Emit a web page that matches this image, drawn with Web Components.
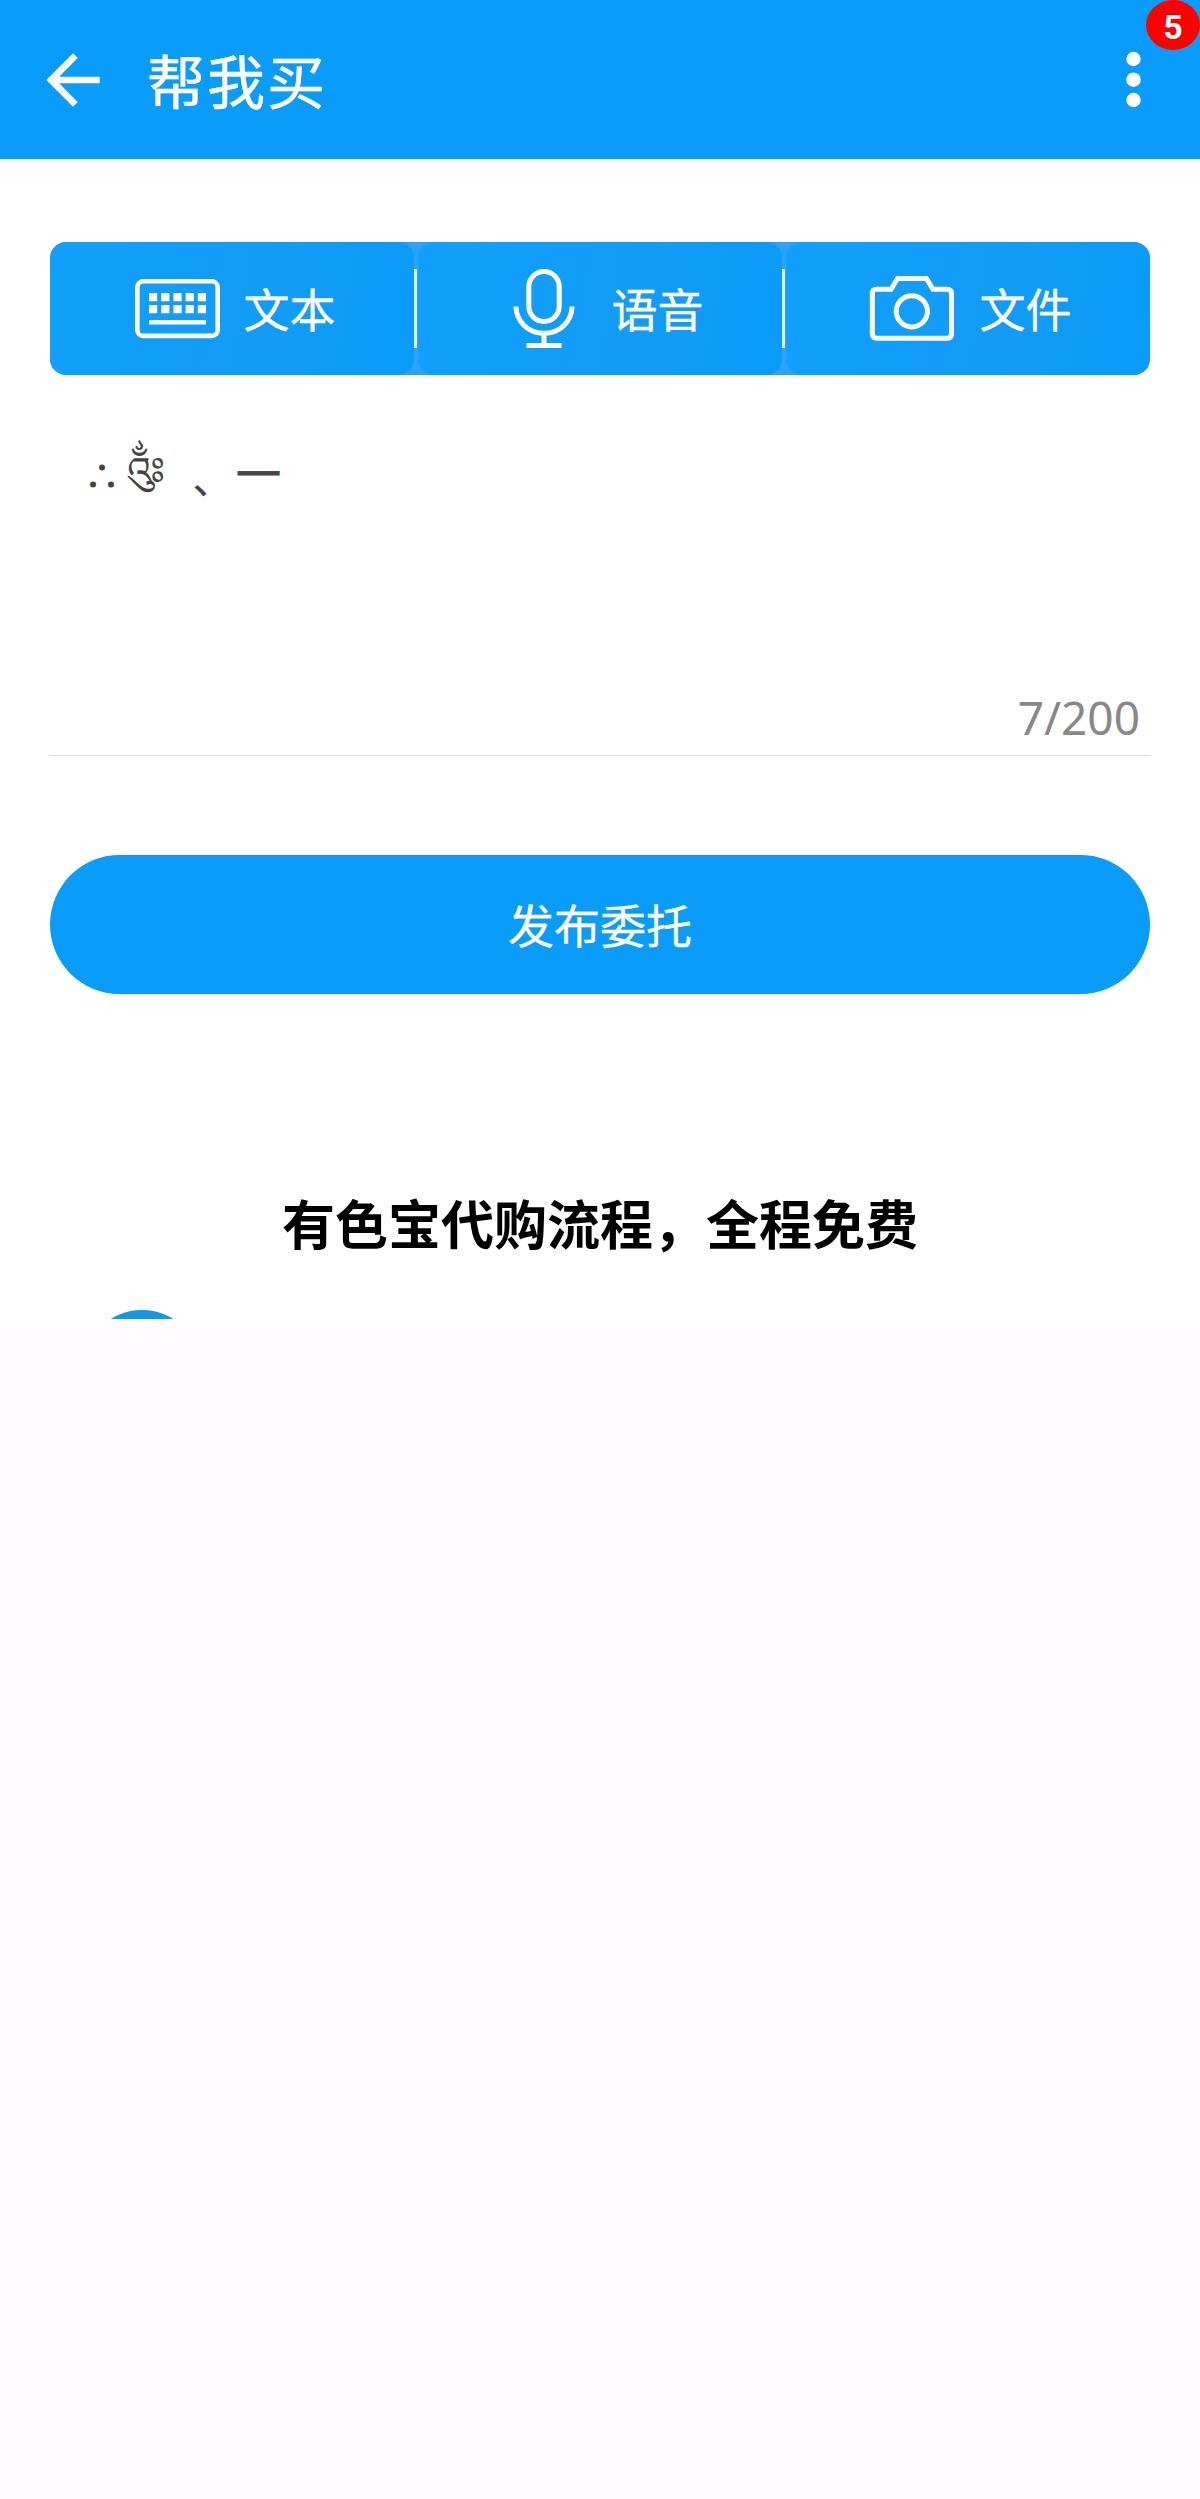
<!DOCTYPE html>
<html lang="zh-CN">
<head>
<meta charset="utf-8">
<title>帮我买</title>
<style>
  html, body {
    margin: 0;
    background: #fffbff;
  }
  body {
    font-family: "Noto Sans", "Noto Sans CJK SC", sans-serif;
  }
</style>
</head>
<body>
<buy-page>
  <app-header slot="header" badge="5">帮我买</app-header>
  <mode-tabs>
    <mode-tab icon="keyboard">文本</mode-tab>
    <mode-tab icon="mic" divider>语音</mode-tab>
    <mode-tab icon="camera" divider>文件</mode-tab>
  </mode-tabs>
  <note-field count="7" max="200"><span class="dots">∴</span><span class="mark">༂</span><span class="comma">、</span><span class="dash">一</span></note-field>
  <submit-button>发布委托</submit-button>
  <flow-section>有色宝代购流程，全程免费</flow-section>
</buy-page>

<script>
const ICONS = {
  keyboard: `
    <svg width="85" height="80" viewBox="0 0 85 80" fill="none" stroke="currentColor">
      <rect x="2.3" y="12.3" width="80.4" height="54.6" rx="6" stroke-width="4.6"/>
      <path d="M14 28.2h57M14 40.2h57" stroke-width="8.2" stroke-dasharray="8.2 4"/>
      <path d="M14 53.3h57" stroke-width="4.6"/>
    </svg>`,
  mic: `
    <svg width="85" height="80" viewBox="1.5 0 85 80" fill="none" stroke="currentColor" stroke-width="5">
      <rect x="27.3" y="2.6" width="30.4" height="49.8" rx="15.2"/>
      <path d="M14.4 37.5C15 53 27 64.3 42.5 64.3S70 53 70.6 37.5"/>
      <path d="M42.5 64v12M25 76.5h35"/>
    </svg>`,
  camera: `
    <svg width="85" height="80" viewBox="1.5 0 85 80" fill="none" stroke="currentColor" stroke-width="5" overflow="visible">
      <path d="M2.8 24.5Q2.8 20.3 7 20.3H21.5L28 9.5H57L63.5 20.3H77.5Q82 20.3 82 24.8V64.5Q82 69.3 77.5 69.3H7.5Q2.8 69.3 2.8 64.5Z"/>
      <circle cx="42.3" cy="42.3" r="15.6"/>
    </svg>`
};

class BuyPage extends HTMLElement {
  constructor() {
    super();
    this.attachShadow({ mode: 'open' });
    this.shadowRoot.innerHTML = `
      <style>
        :host { display: block; height: 1319px; overflow: hidden; background: #fff; }
        main { display: flex; flex-direction: column; padding: 83px 50px 0; }
      </style>
      <slot name="header"></slot>
      <main><slot></slot></main>
    `;
  }
}

class AppHeader extends HTMLElement {
  constructor() {
    super();
    this.attachShadow({ mode: 'open' });
    this.shadowRoot.innerHTML = `
      <style>
        :host {
          display: flex;
          align-items: center;
          position: relative;
          box-sizing: border-box;
          height: 159px;
          padding: 1px 47px 0 33px;
          background: #0a9cf9;
          color: #fff;
        }
        svg { display: block; }
        h1 {
          flex: 1;
          margin: 0 0 0 34px;
          padding-top: 4px;
          font-size: 58px;
          font-weight: 400;
          line-height: 80px;
          letter-spacing: 2px;
          -webkit-text-stroke: 0.5px #fff;
        }
        .badge {
          position: absolute;
          top: 0;
          right: 0;
          width: 54px;
          height: 50px;
          border-radius: 50%;
          background: #fe0000;
          font: 700 34px/54px Roboto, sans-serif;
          text-align: center;
        }
      </style>
      <svg width="80" height="80" viewBox="0 0 24 24" fill="currentColor">
        <path d="M20 11H7.83l5.59-5.59L12 4l-8 8 8 8 1.41-1.41L7.83 13H20v-2z"/>
      </svg>
      <h1><slot></slot></h1>
      <svg width="40" height="80" viewBox="0 0 40 80" fill="currentColor">
        <circle cx="20.5" cy="19" r="7.2"/>
        <circle cx="20.5" cy="39.7" r="7.2"/>
        <circle cx="20.5" cy="60" r="7.2"/>
      </svg>
      <span class="badge"></span>
    `;
  }

  connectedCallback() {
    this.shadowRoot.querySelector('.badge').textContent = this.getAttribute('badge') || '';
  }
}

class ModeTabs extends HTMLElement {
  constructor() {
    super();
    this.attachShadow({ mode: 'open' });
    this.shadowRoot.innerHTML = `
      <style>
        :host {
          display: flex;
          gap: 4px;
          height: 133px;
          border-radius: 16px;
          overflow: hidden;
          background: #2ba3f6;
        }
      </style>
      <slot></slot>
    `;
  }
}

class ModeTab extends HTMLElement {
  constructor() {
    super();
    this.attachShadow({ mode: 'open' });
    this.shadowRoot.innerHTML = `
      <style>
        :host {
          display: flex;
          flex: 1;
          align-items: center;
          justify-content: center;
          gap: 24px;
          position: relative;
          padding-left: 6px;
          border-radius: 16px;
          background: linear-gradient(100deg, #10a0fb, #129cf6 60%, #0a9bf9);
          color: #fff;
          font-size: 46px;
          line-height: 60px;
          -webkit-text-stroke: 0.3px #fff;
        }
        :host([divider])::before {
          content: "";
          position: absolute;
          left: -4px;
          top: 27px;
          width: 3px;
          height: 79px;
          background: #e4fcff;
        }
        svg { display: block; }
      </style>
      <span id="icon"></span>
      <slot></slot>
    `;
  }

  connectedCallback() {
    this.shadowRoot.getElementById('icon').innerHTML = ICONS[this.getAttribute('icon')] || '';
  }
}

class NoteField extends HTMLElement {
  constructor() {
    super();
    this.attachShadow({ mode: 'open' });
    this.shadowRoot.innerHTML = `
      <style>
        :host {
          display: flex;
          flex-direction: column;
          justify-content: space-between;
          box-sizing: border-box;
          height: 381px;
          padding: 65px 10px 6px 35px;
          border-bottom: 1px solid #dcdcdc;
          color: #444;
          font-size: 46px;
          line-height: 64px;
        }
        .text { display: flex; align-items: baseline; height: 64px; }
        .count { align-self: flex-end; color: #888; }
        ::slotted(.dots) { font-size: 34px; -webkit-text-stroke: 1px #444; }
        ::slotted(.mark) { margin: 0 0 5px 6px; font-size: 38px; transform: translateY(-5px); }
        ::slotted(.comma) { margin-left: 28px; font-size: 38px; -webkit-text-stroke: 0.6px #444; transform: translateY(4px); }
        ::slotted(.dash) { margin-left: 5px; font-size: 45px; -webkit-text-stroke: 0.8px #444; transform: translateY(2px); }
      </style>
      <div class="text"><slot></slot></div>
      <div class="count"></div>
    `;
  }

  connectedCallback() {
    this.shadowRoot.querySelector('.count').textContent =
      `${this.getAttribute('count')}/${this.getAttribute('max')}`;
  }
}

class SubmitButton extends HTMLElement {
  constructor() {
    super();
    this.attachShadow({ mode: 'open' });
    this.shadowRoot.innerHTML = `
      <style>
        :host { display: block; margin-top: 99px; }
        button {
          display: block;
          width: 100%;
          height: 139px;
          padding: 0 0 4px;
          border: 0;
          border-radius: 70px;
          background: #0a9cf9;
          color: #fff;
          font: inherit;
          font-size: 46px;
          -webkit-text-stroke: 0.3px #fff;
        }
      </style>
      <button type="button"><slot></slot></button>
    `;
  }
}

class FlowSection extends HTMLElement {
  constructor() {
    super();
    this.attachShadow({ mode: 'open' });
    this.shadowRoot.innerHTML = `
      <style>
        :host { display: block; margin-top: 191px; }
        h2 {
          margin: 0;
          color: #000;
          font-size: 53px;
          font-weight: 700;
          line-height: 80px;
          text-align: center;
        }
        .step {
          width: 118px;
          height: 118px;
          margin: 45px 0 0 33px;
          border-radius: 50%;
          background: #1296e8;
        }
      </style>
      <h2><slot></slot></h2>
      <div class="step"></div>
    `;
  }
}

customElements.define('buy-page', BuyPage);
customElements.define('app-header', AppHeader);
customElements.define('mode-tabs', ModeTabs);
customElements.define('mode-tab', ModeTab);
customElements.define('note-field', NoteField);
customElements.define('submit-button', SubmitButton);
customElements.define('flow-section', FlowSection);
</script>
</body>
</html>
